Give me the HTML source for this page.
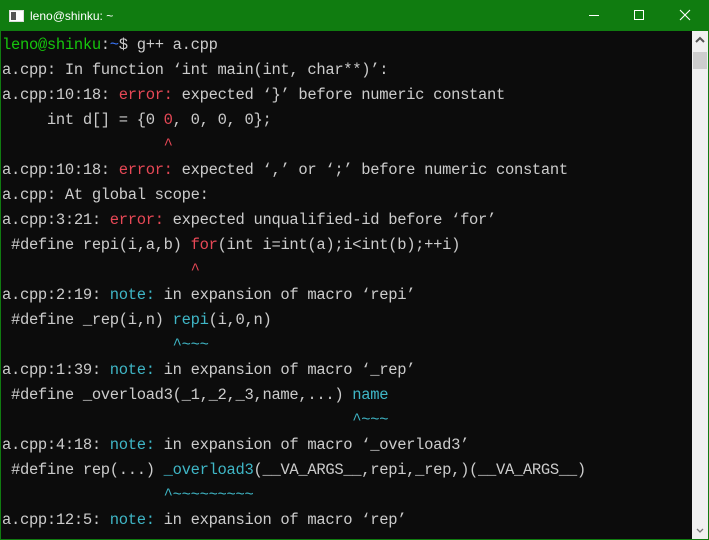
<!DOCTYPE html>
<html><head><style>
html,body{margin:0;padding:0;background:#0c0c0c;}
body{width:709px;height:540px;position:relative;overflow:hidden;}
.frame{position:absolute;left:0;top:0;width:707px;height:538px;border:1px solid #107c10;}
.title{position:absolute;left:0;top:0;width:709px;height:31px;background:#107c10;color:#fff;font:12px "Liberation Sans",sans-serif;}
.title .t{position:absolute;left:30px;top:9px;}
.term{position:absolute;left:2px;top:33px;font-family:"Liberation Mono",monospace;font-size:15.5px;letter-spacing:-0.32px;line-height:25px;color:#cccccc;white-space:pre;}
.g{color:#16c60c}.b{color:#3b78ff}.r{color:#e74856}.c{color:#3fb6c6}
.sb{position:absolute;left:692px;top:31px;width:16px;height:508px;background:#f0f0f0;}
.thumb{position:absolute;left:693px;top:52px;width:14px;height:17px;background:#cdcdcd;}
</style></head><body>
<div class="frame"></div>
<div class="title">
<svg style="position:absolute;left:9px;top:10px" width="15" height="12"><rect x="0.5" y="0.5" width="14" height="11" fill="#fff" stroke="#ddd"/><rect x="2" y="2" width="5" height="8" fill="#555"/></svg>
<span class="t">leno@shinku: ~</span>
<svg style="position:absolute;left:580px;top:0" width="129" height="31">
<line x1="9" y1="15.5" x2="19" y2="15.5" stroke="#fff" stroke-width="1"/>
<rect x="54.5" y="10.5" width="9" height="9" fill="none" stroke="#fff"/>
<path d="M100 10 L110 20 M110 10 L100 20" stroke="#fff" stroke-width="1.1"/>
</svg>
</div>
<div class="sb"></div>
<svg style="position:absolute;left:692px;top:33px" width="16" height="14"><path d="M4 9 L8 5 L12 9" fill="none" stroke="#555" stroke-width="2"/></svg>
<div class="thumb"></div>
<svg style="position:absolute;left:692px;top:525px" width="16" height="12"><path d="M5 4 L8 7 L11 4" fill="none" stroke="#777" stroke-width="1.3"/></svg>
<div class="term"><span class="g">leno@shinku</span>:<span class="b">~</span>$ g++ a.cpp
a.cpp: In function ‘int main(int, char**)’:
a.cpp:10:18: <span class="r">error: </span>expected ‘}’ before numeric constant
     int d[] = {0 <span class="r">0</span>, 0, 0, 0};
                  <span class="r">^</span>
a.cpp:10:18: <span class="r">error: </span>expected ‘,’ or ‘;’ before numeric constant
a.cpp: At global scope:
a.cpp:3:21: <span class="r">error: </span>expected unqualified-id before ‘for’
 #define repi(i,a,b) <span class="r">for</span>(int i=int(a);i&lt;int(b);++i)
                     <span class="r">^</span>
a.cpp:2:19: <span class="c">note: </span>in expansion of macro ‘repi’
 #define _rep(i,n) <span class="c">repi</span>(i,0,n)
                   <span class="c">^~~~</span>
a.cpp:1:39: <span class="c">note: </span>in expansion of macro ‘_rep’
 #define _overload3(_1,_2,_3,name,...) <span class="c">name</span>
                                       <span class="c">^~~~</span>
a.cpp:4:18: <span class="c">note: </span>in expansion of macro ‘_overload3’
 #define rep(...) <span class="c">_overload3</span>(__VA_ARGS__,repi,_rep,)(__VA_ARGS__)
                  <span class="c">^~~~~~~~~~</span>
a.cpp:12:5: <span class="c">note: </span>in expansion of macro ‘rep’</div>
</body></html>
